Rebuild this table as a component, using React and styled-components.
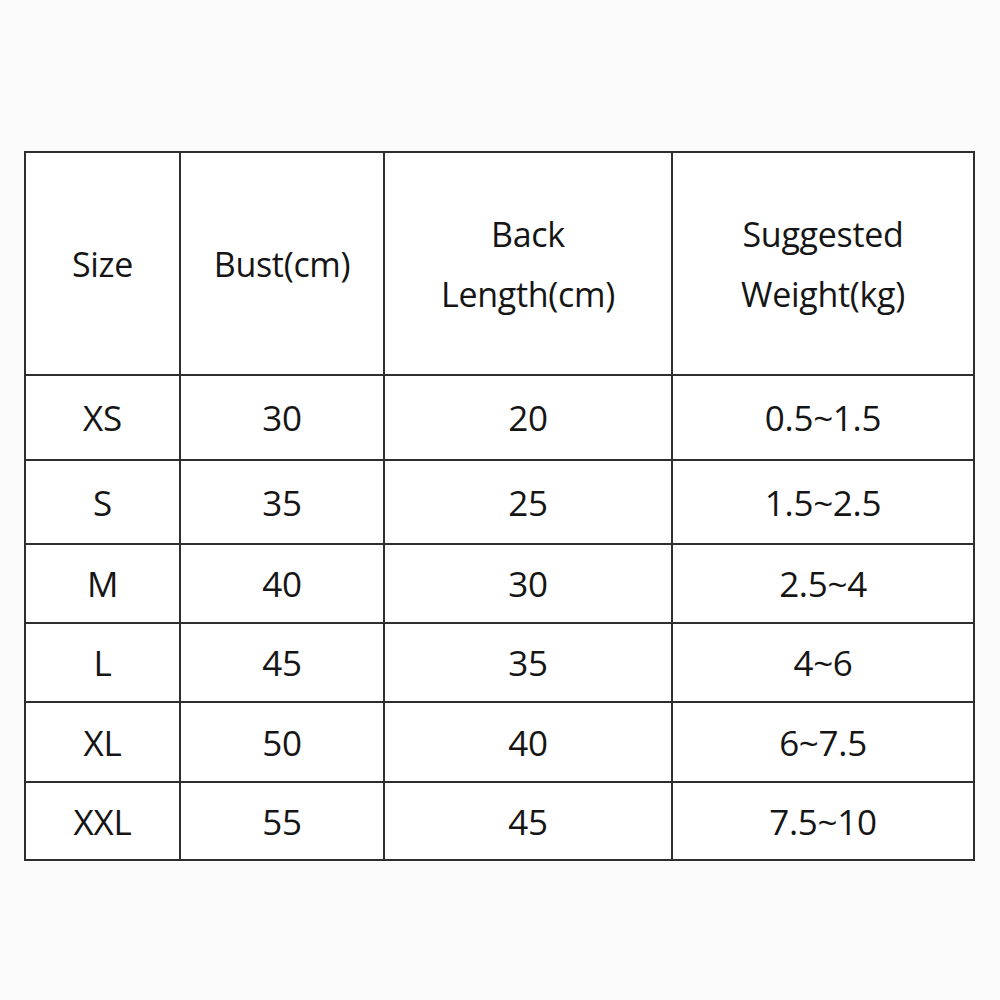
import React from "react";
import styled, { createGlobalStyle } from "styled-components";

const Global = createGlobalStyle`
  html, body { margin: 0; padding: 0; background: #fbfbfb; }
  body { font-family: "Open Sans", "Noto Sans", sans-serif; color: #151515; }
`;

const Page = styled.div`
  width: 1000px;
  height: 1000px;
  box-sizing: border-box;
  padding: 151px 0 0 24px;
`;

const Grid = styled.div`
  display: grid;
  width: max-content;
  grid-template-columns: 155px 204px 288px 302px;
  grid-template-rows: 223px 85px 84px 79px 79px 80px 78px;
  border-left: 2px solid #2e2e2e;
  border-top: 2px solid #2e2e2e;
  background: #fff;
`;

const Cell = styled.div`
  box-sizing: border-box;
  border-right: 2px solid #2e2e2e;
  border-bottom: 2px solid #2e2e2e;
  display: flex;
  flex-direction: column;
  align-items: center;
  justify-content: center;
  text-align: center;
  font-size: ${(p) => (p.$head ? "34px" : "35px")};
  line-height: ${(p) => (p.$head ? "60px" : "1")};
  letter-spacing: -0.3px;
`;

const head = [["Size"], ["Bust(cm)"], ["Back", "Length(cm)"], ["Suggested", "Weight(kg)"]];
const rows = [
  ["XS", "30", "20", "0.5~1.5"],
  ["S", "35", "25", "1.5~2.5"],
  ["M", "40", "30", "2.5~4"],
  ["L", "45", "35", "4~6"],
  ["XL", "50", "40", "6~7.5"],
  ["XXL", "55", "45", "7.5~10"],
];

export default function App() {
  return (
    <Page>
      <Global />
      <Grid>
        {head.map((lines, i) => (
          <Cell $head key={"h" + i}>
            {lines.map((l) => (
              <span key={l}>{l}</span>
            ))}
          </Cell>
        ))}
        {rows.map((r, ri) =>
          r.map((v, ci) => <Cell key={ri + "-" + ci}>{v}</Cell>)
        )}
      </Grid>
    </Page>
  );
}
